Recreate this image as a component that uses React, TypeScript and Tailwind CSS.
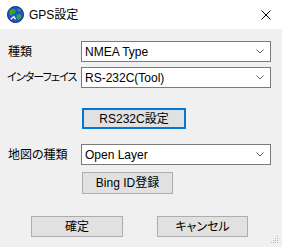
import React from "react";

const font = "font-['Liberation_Sans','Noto_Sans_CJK_JP',sans-serif] [font-feature-settings:'palt']";

function Globe() {
  return (
    <svg width="17" height="17" viewBox="0 0 16 16">
      <circle cx="8" cy="8" r="7.6" fill="#1f4fd6" stroke="#0b1f5e" strokeWidth="0.8" />
      <path d="M2.5 4 L6 2.5 L8.5 4.5 L7.5 7 L5.5 7.2 L4.5 9.5 L2 7.5 Z" fill="#35a832" />
      <path d="M9 8 L12.5 7.5 L13.8 10.5 L10.5 13.5 L9 11 Z" fill="#35a832" />
      <path d="M9.8 2.2 L13 3.8 L12.2 5.2 L10 4.2 Z" fill="#35a832" />
      <path d="M3.5 12.5 L6.5 10 L8 12.5" stroke="#f0f0f0" strokeWidth="1.3" fill="none" />
    </svg>
  );
}

function Combo({ value }: { value: string }) {
  return (
    <div className="flex h-[21px] w-[190px] items-center justify-between border border-[#7a7a7a] bg-white pl-[3px] pr-[6px]">
      <span className="text-[12px] text-black">{value}</span>
      <svg width="8" height="5" viewBox="0 0 8 5">
        <path d="M0.5 0.5 L4 4 L7.5 0.5" stroke="#606060" fill="none" />
      </svg>
    </div>
  );
}

function Btn({ label, w, h = 21, focus = false }: { label: string; w: number; h?: number; focus?: boolean }) {
  return (
    <div
      className={`flex items-center justify-center bg-[#e1e1e1] text-[12px] text-black ${
        focus ? "border-2 border-[#0078d7]" : "border border-[#adadad]"
      }`}
      style={{ width: w, height: h }}
    >
      {label}
    </div>
  );
}

export default function App() {
  return (
    <div className={`relative flex h-[247px] w-[282px] flex-col bg-[#f0f0f0] ${font}`}>
      <div className="flex h-[29px] items-center bg-white pl-[7px] pr-[11px]">
        <Globe />
        <span className="ml-[5px] text-[12px] text-black">GPS設定</span>
        <svg className="ml-auto" width="10" height="10" viewBox="0 0 10 10">
          <path d="M0.5 0.5 L9.5 9.5 M9.5 0.5 L0.5 9.5" stroke="#000" strokeWidth="1" />
        </svg>
      </div>

      <div className="mt-[12px] flex items-center">
        <span className="w-[81px] pl-[8px] text-[12px] text-black">種類</span>
        <Combo value="NMEA Type" />
      </div>
      <div className="mt-[5px] flex items-center">
        <span className="w-[81px] whitespace-nowrap pl-[7px] text-[11px] tracking-[-0.9px] text-black">インターフェイス</span>
        <Combo value="RS-232C(Tool)" />
      </div>
      <div className="ml-[82px] mt-[20px]">
        <Btn label="RS232C設定" w={104} focus />
      </div>

      <div className="mt-[15px] flex items-center">
        <span className="w-[81px] pl-[8px] text-[12px] text-black">地図の種類</span>
        <Combo value="Open Layer" />
      </div>
      <div className="ml-[82px] mt-[7px]">
        <Btn label="Bing ID登録" w={91} h={22} />
      </div>

      <div className="mt-[22px] flex">
        <div className="ml-[31px]">
          <Btn label="確定" w={92} />
        </div>
        <div className="ml-[34px]">
          <Btn label="キャンセル" w={91} />
        </div>
      </div>

      <svg className="absolute bottom-[3px] right-[3px]" width="10" height="10" viewBox="0 0 10 10">
        <g fill="#b8b8b8">
          <rect x="8" y="2" width="1" height="1" />
          <rect x="6" y="4" width="1" height="1" />
          <rect x="8" y="4" width="1" height="1" />
          <rect x="4" y="6" width="1" height="1" />
          <rect x="6" y="6" width="1" height="1" />
          <rect x="8" y="6" width="1" height="1" />
          <rect x="2" y="8" width="1" height="1" />
          <rect x="4" y="8" width="1" height="1" />
          <rect x="6" y="8" width="1" height="1" />
          <rect x="8" y="8" width="1" height="1" />
        </g>
      </svg>
    </div>
  );
}
